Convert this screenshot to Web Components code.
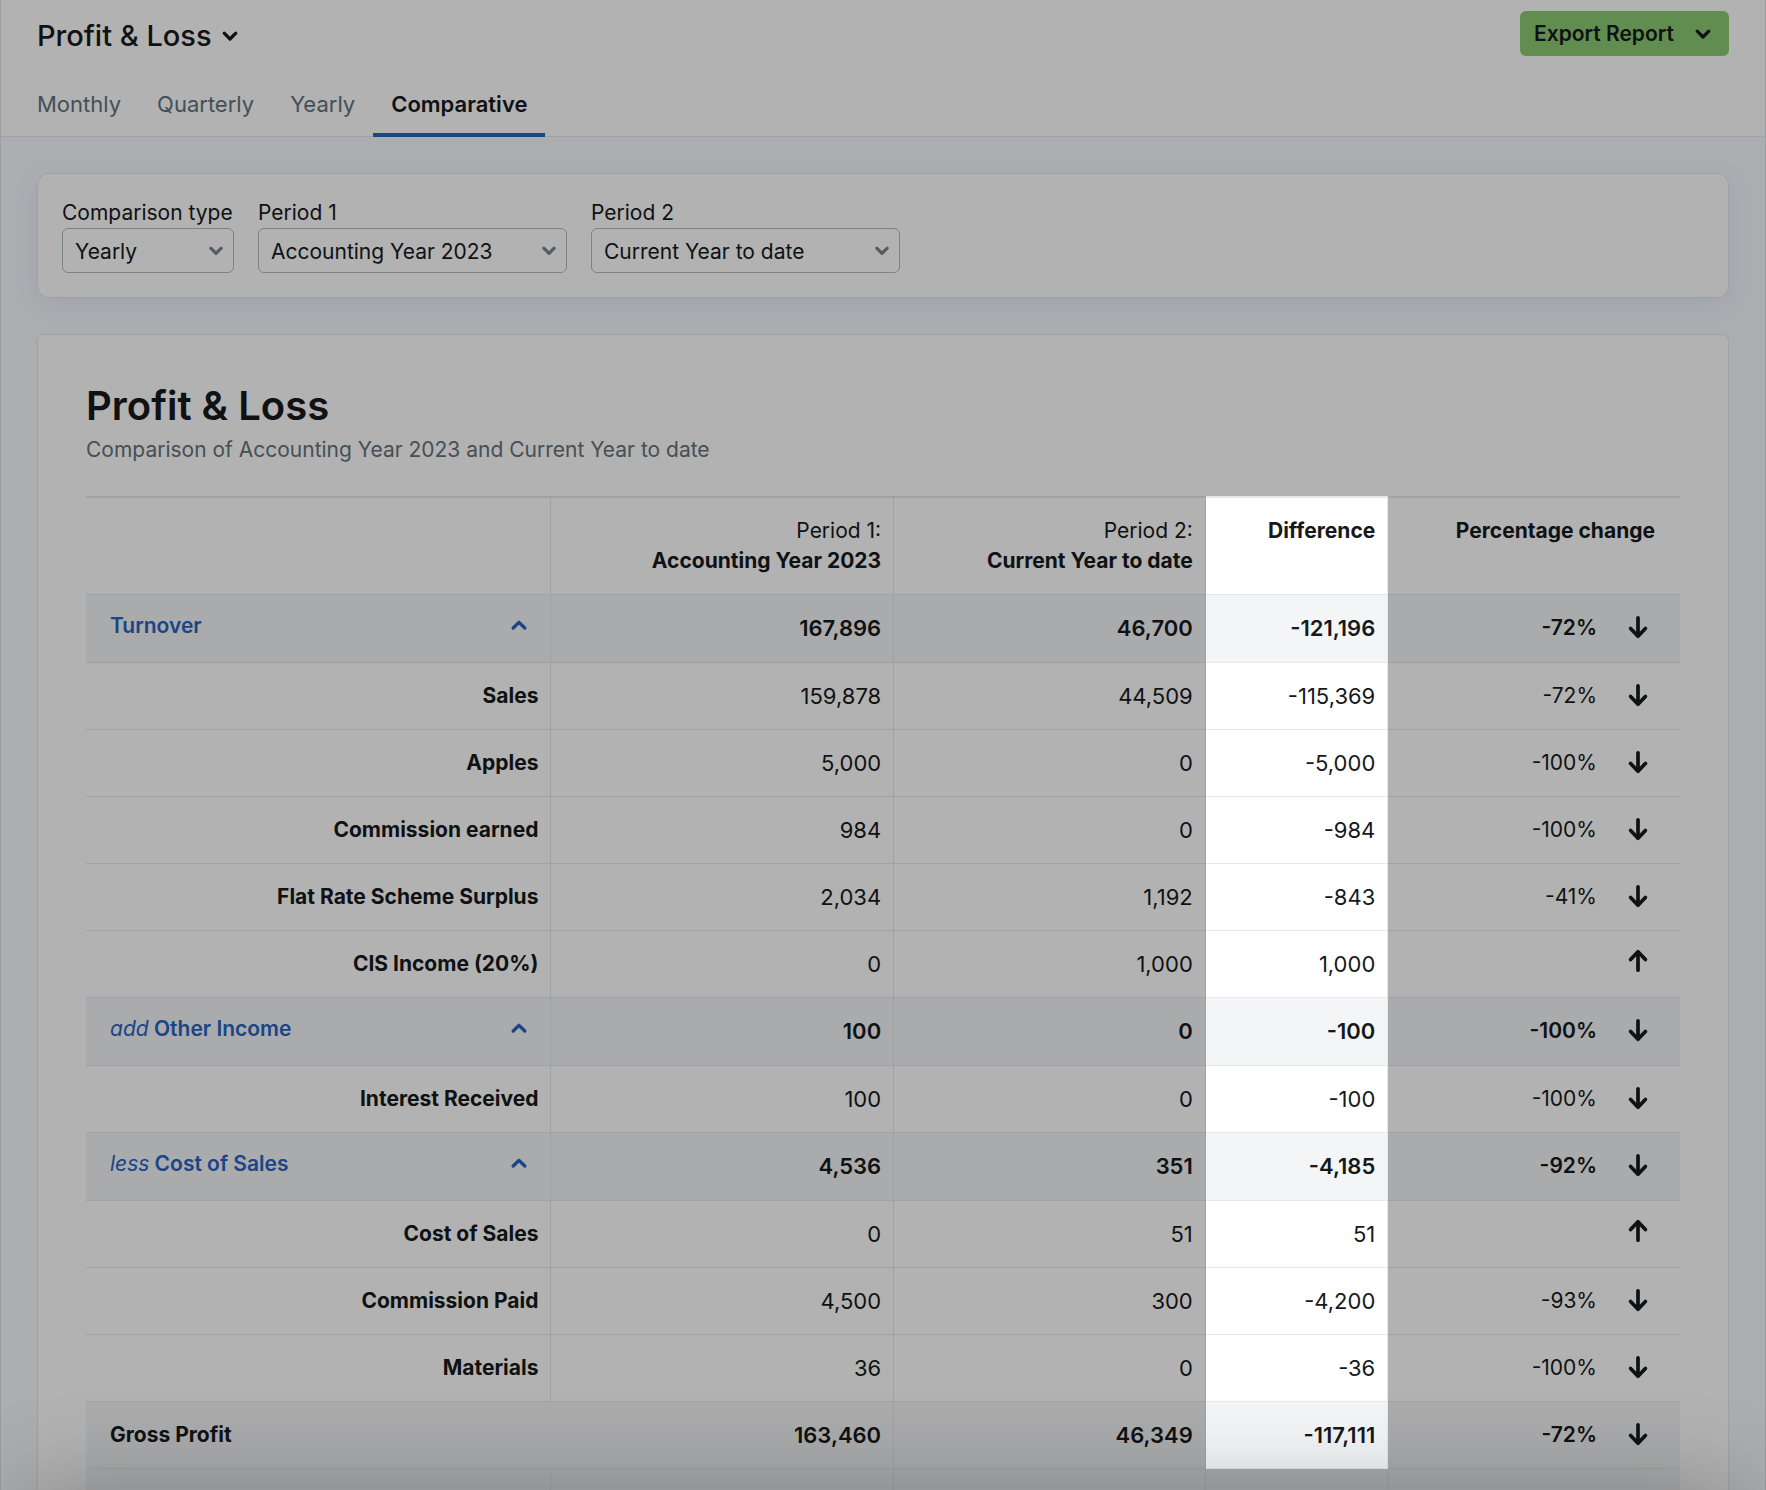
<!DOCTYPE html>
<html lang="en">
<head>
<meta charset="utf-8">
<title>Profit &amp; Loss</title>
<style>
  :root {
    --ink: #16191b;
    --muted: #64727b;
    --line: #e4e7eb;
    --blue: #2864c2;
    --canvas: #f6f8fe;
    --shade: #f4f5f7;
  }
  html, body { height: 100%; }
  body {
    margin: 0;
    overflow: hidden;
    background: #fff;
    color: var(--ink);
    font: 400 21px/30px Inter, "Liberation Sans", sans-serif;
  }
</style>
</head>
<body>
<report-app>
  <report-header slot="header" heading="Profit &amp; Loss">
    <report-tabs current="Comparative" items="Monthly,Quarterly,Yearly,Comparative"></report-tabs>
  </report-header>
  <filter-card>
    <select-field name="type" label="Comparison type" value="Yearly" size="172"></select-field>
    <select-field name="period1" label="Period 1" value="Accounting Year 2023" size="309"></select-field>
    <select-field name="period2" label="Period 2" value="Current Year to date" size="309"></select-field>
  </filter-card>
  <report-card>
    <span slot="title">Profit &amp; Loss</span>
    <span slot="subtitle">Comparison of Accounting Year 2023 and Current Year to date</span>
    <comparison-table></comparison-table>
  </report-card>
</report-app>

<script>
const paths = {
  'chevron-down': ['0 0 16 10', 16, 10, 'M2.2 2.2 8 8l5.8-5.8', 3.2],
  'chevron-small': ['0 0 16 10', 16, 10, 'M2.8 2.2 8 7.4l5.2-5.2', 3.2],
  'chevron-up': ['0 0 16 10', 16, 10, 'M2.2 7 8 1.4 13.8 7', 3.4],
  'arrow-down': ['0 -2 20 28', 20, 28, 'M10 1.8V20.2M2.6 12.4 10 20.2l7.4-7.8', 3.7],
  'arrow-up': ['0 -2 20 28', 20, 28, 'M10 18.2V-.2M2.6 7.6 10 -.2l7.4 7.8', 3.7],
};

class UiIcon extends HTMLElement {
  constructor() {
    super();
    this.attachShadow({ mode: 'open' });
  }
  connectedCallback() {
    const [box, w, h, d, stroke] = paths[this.getAttribute('name')];
    this.shadowRoot.innerHTML = `
      <style>
        :host { display: inline-flex; flex: none; }
        svg { display: block; overflow: visible; fill: none; stroke: currentColor; stroke-linecap: round; stroke-linejoin: round; }
      </style>
      <svg viewBox="${box}" width="${w}" height="${h}" stroke-width="${stroke}" aria-hidden="true"><path d="${d}"/></svg>`;
  }
}
customElements.define('ui-icon', UiIcon);

class ReportApp extends HTMLElement {
  constructor() {
    super();
    this.attachShadow({ mode: 'open' }).innerHTML = `
      <style>
        :host {
          display: flex; flex-direction: column; box-sizing: border-box; min-height: 100vh;
          border: solid #dfe2e6; border-width: 0 1px; background: var(--canvas);
        }
        main { display: flex; flex-direction: column; gap: 36px; padding: 36px; }
        .footer-shade {
          position: fixed; left: 20px; right: 20px; bottom: -160px; height: 160px; z-index: 20;
          box-shadow: 0 0 90px rgba(0, 0, 0, .25); pointer-events: none;
        }
      </style>
      <slot name="header"></slot>
      <main><slot></slot></main>
      <div class="footer-shade"></div>`;
  }
}
customElements.define('report-app', ReportApp);

class ReportHeader extends HTMLElement {
  constructor() {
    super();
    this.attachShadow({ mode: 'open' });
  }
  connectedCallback() {
    this.shadowRoot.innerHTML = `
      <style>
        :host { display: block; background: #fff; border-bottom: 1px solid var(--line); }
        .bar { display: flex; justify-content: space-between; align-items: flex-end; padding: 11px 36px 0; }
        button { font: inherit; color: inherit; border: 0; margin: 0; cursor: pointer; display: flex; align-items: center; }
        h2 { margin: 0; font: 500 29px/40px Inter, sans-serif; }
        .title { padding: 0; gap: 10px; background: none; }
        .export {
          box-sizing: border-box; height: 45px; min-width: 209px; padding: 0 18px 0 14px;
          justify-content: space-between; border-radius: 6px; background: #8cca75; font-weight: 600;
        }
      </style>
      <div class="bar">
        <h2><button class="title"><span></span><ui-icon name="chevron-down"></ui-icon></button></h2>
        <button class="export">Export Report<ui-icon name="chevron-down"></ui-icon></button>
      </div>
      <slot></slot>`;
    this.shadowRoot.querySelector('.title span').textContent = this.getAttribute('heading');
  }
}
customElements.define('report-header', ReportHeader);

class ReportTabs extends HTMLElement {
  constructor() {
    super();
    this.attachShadow({ mode: 'open' });
  }
  connectedCallback() {
    const current = this.getAttribute('current');
    const tabs = this.getAttribute('items').split(',').map(name =>
      `<a href="#${name.toLowerCase()}"${name === current ? ' aria-current="page"' : ''}>${name}</a>`).join('');
    this.shadowRoot.innerHTML = `
      <style>
        :host { display: block; margin: 16px 18px -1px; font-size: 22px; }
        nav { display: flex; }
        a { padding: 17px 18px 14px; border-bottom: 4px solid transparent; color: var(--muted); text-decoration: none; }
        a[aria-current] { color: var(--ink); font-weight: 600; border-color: var(--blue); }
      </style>
      <nav>${tabs}</nav>`;
  }
}
customElements.define('report-tabs', ReportTabs);

class FilterCard extends HTMLElement {
  constructor() {
    super();
    this.attachShadow({ mode: 'open' }).innerHTML = `
      <style>
        :host {
          display: block; padding: 24px; background: #fff; border: 1px solid var(--line);
          border-radius: 12px; box-shadow: 0 6px 24px rgba(40, 100, 120, .09);
        }
        form { display: flex; gap: 24px; margin: 0; }
      </style>
      <form><slot></slot></form>`;
  }
}
customElements.define('filter-card', FilterCard);

class SelectField extends HTMLElement {
  constructor() {
    super();
    this.attachShadow({ mode: 'open' });
  }
  connectedCallback() {
    const name = this.getAttribute('name');
    this.shadowRoot.innerHTML = `
      <style>
        :host { display: block; flex: 0 1 ${this.getAttribute('size')}px; }
        label { display: block; white-space: nowrap; }
        .box { display: grid; align-items: center; }
        select, ui-icon { grid-area: 1 / 1; }
        select {
          appearance: none; width: 100%; height: 45px; margin: 0; padding: 2px 32px 0 12px; box-sizing: border-box;
          font: inherit; color: inherit; background: #fff; border: 1px solid #b3bcbf; border-radius: 6px;
        }
        ui-icon { justify-self: end; margin-right: 10px; color: #78868f; pointer-events: none; }
      </style>
      <label for="${name}">${this.getAttribute('label')}</label>
      <div class="box">
        <select id="${name}" name="${name}"><option>${this.getAttribute('value')}</option></select>
        <ui-icon name="chevron-small"></ui-icon>
      </div>`;
  }
}
customElements.define('select-field', SelectField);

class ReportCard extends HTMLElement {
  constructor() {
    super();
    this.attachShadow({ mode: 'open' }).innerHTML = `
      <style>
        :host { display: block; padding: 46px 48px; background: #fff; border: 1px solid var(--line); border-radius: 6px; }
        h1 { margin: 0 0 4px; font-size: 40px; line-height: 50px; font-weight: 600; }
        p { margin: 0 0 31px; color: var(--muted); }
      </style>
      <h1><slot name="title"></slot></h1>
      <p><slot name="subtitle"></slot></p>
      <slot></slot>`;
  }
}
customElements.define('report-card', ReportCard);

const rows = [
  { kind: 'section', label: 'Turnover', values: ['167,896', '46,700', '-121,196', '-72%'], trend: 'down' },
  { label: 'Sales', values: ['159,878', '44,509', '-115,369', '-72%'], trend: 'down' },
  { label: 'Apples', values: ['5,000', '0', '-5,000', '-100%'], trend: 'down' },
  { label: 'Commission earned', values: ['984', '0', '-984', '-100%'], trend: 'down' },
  { label: 'Flat Rate Scheme Surplus', values: ['2,034', '1,192', '-843', '-41%'], trend: 'down' },
  { label: 'CIS Income (20%)', values: ['0', '1,000', '1,000', ''], trend: 'up' },
  { kind: 'section', prefix: 'add', label: 'Other Income', values: ['100', '0', '-100', '-100%'], trend: 'down' },
  { label: 'Interest Received', values: ['100', '0', '-100', '-100%'], trend: 'down' },
  { kind: 'section', prefix: 'less', label: 'Cost of Sales', values: ['4,536', '351', '-4,185', '-92%'], trend: 'down' },
  { label: 'Cost of Sales', values: ['0', '51', '51', ''], trend: 'up' },
  { label: 'Commission Paid', values: ['4,500', '300', '-4,200', '-93%'], trend: 'down' },
  { label: 'Materials', values: ['36', '0', '-36', '-100%'], trend: 'down' },
  { kind: 'total', label: 'Gross Profit', values: ['163,460', '46,349', '-117,111', '-72%'], trend: 'down' },
  { kind: 'total next', label: '', values: ['', '', '', ''], trend: 'down' },
];

class ComparisonTable extends HTMLElement {
  constructor() {
    super();
    this.attachShadow({ mode: 'open' });
  }
  head(row) {
    if (row.kind !== 'section') return row.label;
    const prefix = row.prefix ? `<i>${row.prefix}</i> ` : '';
    return `<button aria-expanded="true"><span>${prefix}${row.label}</span><ui-icon name="chevron-up"></ui-icon></button>`;
  }
  connectedCallback() {
    const body = rows.map(row => {
      const [a, b, c, pct] = row.values;
      return `<tr class="${row.kind || ''}"><th scope="row">${this.head(row)}</th><td>${a}</td><td>${b}</td><td>${c}</td>
        <td class="pct"><div><span>${pct}</span><ui-icon name="arrow-${row.trend}"></ui-icon></div></td></tr>`;
    }).join('');
    this.shadowRoot.innerHTML = `
      <style>
        :host { display: block; --row: 67px; --section: 68px; --head: 99px; }
        table { width: 100%; table-layout: fixed; border-collapse: separate; border-spacing: 0; }
        th, td {
          box-sizing: border-box; height: var(--row); padding: 18px 12px 0; vertical-align: top; text-align: right;
          border: solid var(--line); border-width: 0 1px 1px 0;
        }
        th { font-weight: 700; }
        th span { font-weight: 400; }
        td { font-size: 22px; }
        tr > :last-child { border-right: 0; }
        thead th, thead td { height: var(--head); border-top-width: 2px; }
        thead th:last-child { padding-right: 25px; }
        .section > *, .total > * { background: var(--shade); }
        .section td, .total td { font-weight: 600; }
        .section > * { height: var(--section); }
        .section th { padding: 16px 23px 0 24px; }
        .total th { padding-left: 24px; text-align: left; border-right-color: transparent; }
        .next th { border-right-color: var(--line); }
        button {
          display: flex; justify-content: space-between; align-items: center; width: 100%; padding: 0; margin: 0;
          border: 0; background: none; font: inherit; color: var(--blue); cursor: pointer;
        }
        button span { font-weight: 600; }
        i { font-weight: 400; }
        .pct { padding-right: 32px; font-size: 21px; }
        .pct div { display: flex; justify-content: flex-end; align-items: center; gap: 31px; height: 30px; }
        .focus { position: relative; }
        .spotlight {
          position: absolute; top: -2px; left: 0; right: -1px; z-index: 10; pointer-events: none;
          height: calc(var(--head) + 3 * var(--section) + 10 * var(--row));
          box-shadow: 0 0 0 200vmax rgba(0, 0, 0, .3);
        }
      </style>
      <table>
        <colgroup>
          <col style="width:29.2%"><col style="width:21.5%"><col style="width:19.55%"><col style="width:11.45%"><col>
        </colgroup>
        <thead>
          <tr>
            <td></td>
            <th scope="col"><span>Period 1:</span><br>Accounting Year 2023</th>
            <th scope="col"><span>Period 2:</span><br>Current Year to date</th>
            <th scope="col" class="focus">Difference<div class="spotlight"></div></th>
            <th scope="col">Percentage change</th>
          </tr>
        </thead>
        <tbody>${body}</tbody>
      </table>`;
  }
}
customElements.define('comparison-table', ComparisonTable);
</script>
</body>
</html>
